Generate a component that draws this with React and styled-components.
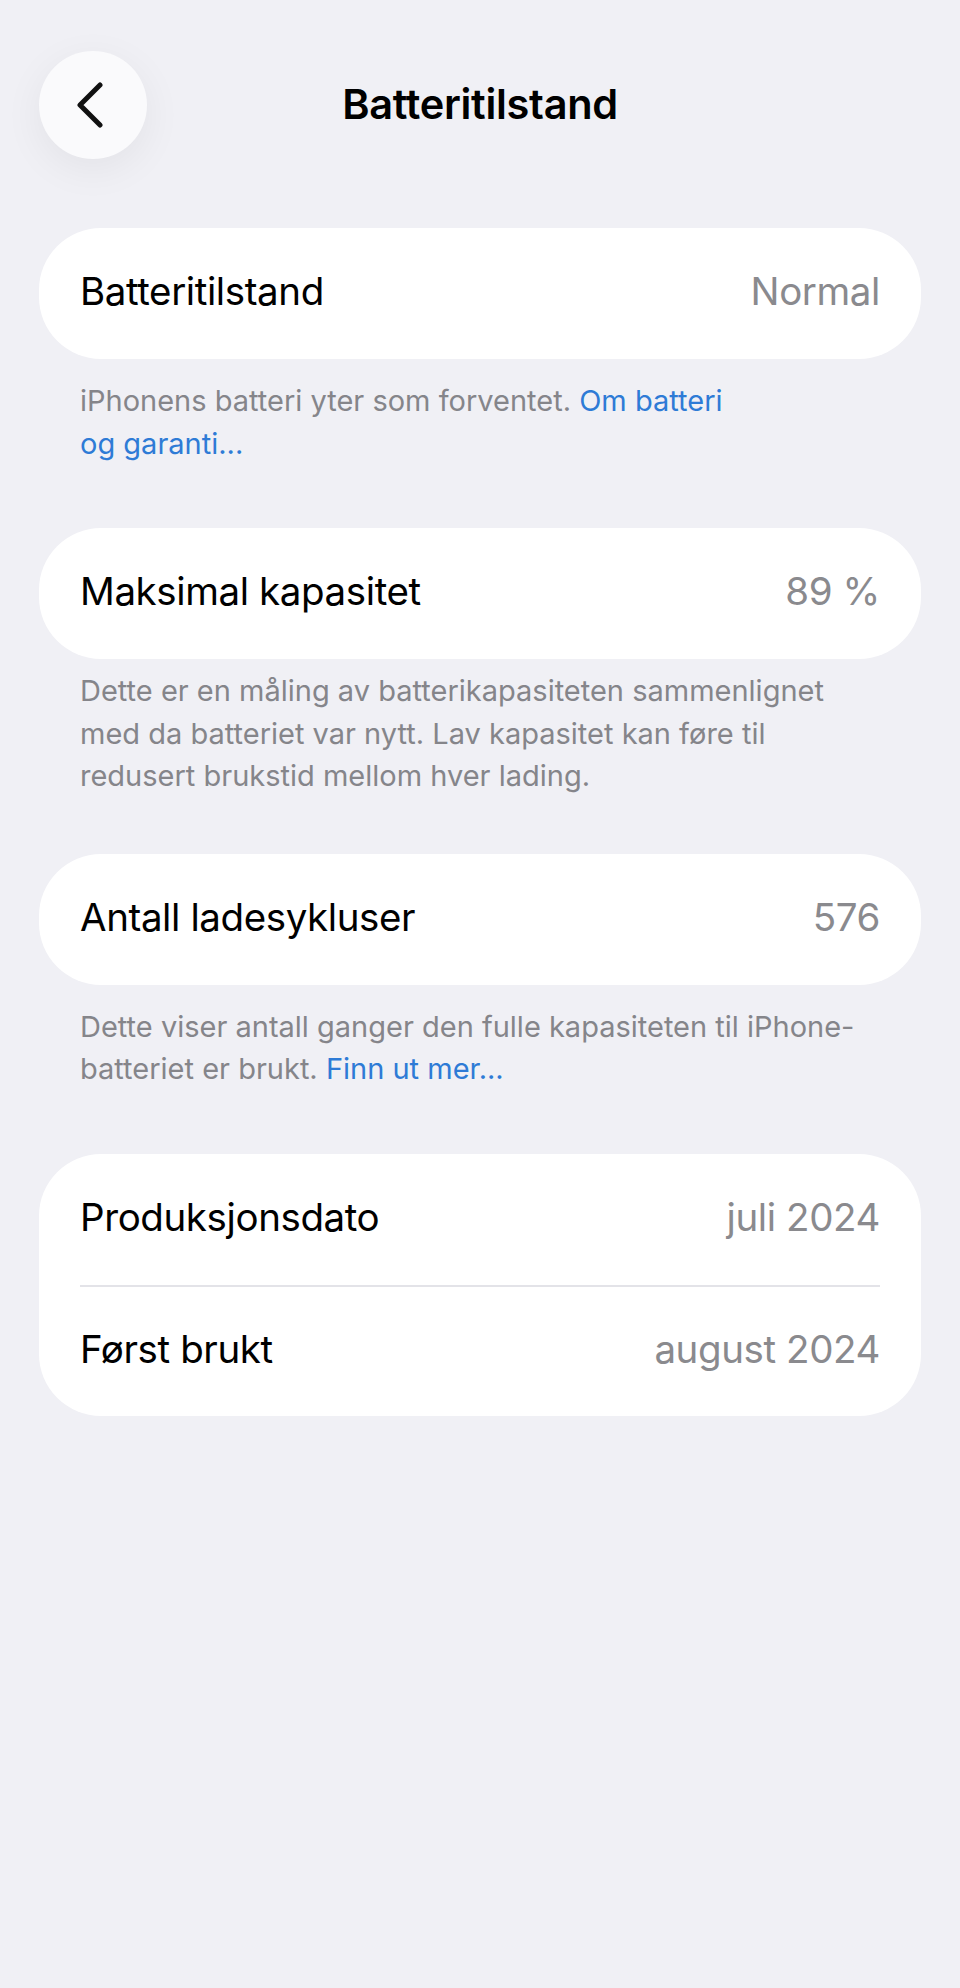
import styled, { createGlobalStyle } from 'styled-components';

const GlobalStyle = createGlobalStyle`
    html, body {
        margin: 0;
        padding: 0;
        background: #f0f0f5;
    }
    body {
        font-family: Inter, "Noto Sans", "Liberation Sans", sans-serif;
        -webkit-font-smoothing: antialiased;
    }
`;

const Page = styled.div`
    min-height: 1988px;
    box-sizing: border-box;
    padding: 51px 39px 0;
    background: #f0f0f5;
`;

const Header = styled.header`
    display: grid;
    grid-template-columns: 108px 1fr 108px;
    align-items: center;
    height: 108px;
    margin-bottom: 69px;
`;

const BackButton = styled.button`
    width: 108px;
    height: 108px;
    border-radius: 50%;
    border: none;
    padding: 0 6px 0 0;
    background: #fafafc;
    box-shadow: 0 10px 40px rgba(0, 0, 0, 0.06);
    display: flex;
    align-items: center;
    justify-content: center;
    cursor: pointer;
`;

const Title = styled.h1`
    margin: 0;
    padding-bottom: 3px;
    text-align: center;
    font-size: 41.5px;
    font-weight: 600;
    letter-spacing: -0.3px;
    color: #000;
`;

const Section = styled.section`
    display: flex;
    flex-direction: column;
`;

const Card = styled.div`
    background: #fff;
    border-radius: 62px;
    padding: 0 41px;
`;

const Row = styled.div`
    display: flex;
    align-items: center;
    justify-content: space-between;
    height: 131px;
    box-sizing: border-box;
    padding-bottom: 5px;
    border-top: ${(props) => (props.$divided ? '2px solid #e3e3e8' : 'none')};
    font-size: 38.5px;
    letter-spacing: -0.4px;
`;

const Label = styled.span`
    color: #000;
`;

const Value = styled.span`
    color: #8a8a8e;
`;

const Footer = styled.p`
    margin: 0;
    padding: ${(props) => (props.$tight ? '11px 41px 56px' : '21px 41px 63px')};
    font-size: 29px;
    line-height: 42.5px;
    color: #85858a;
`;

const Link = styled.span`
    color: #2e7bd6;
`;

const groups = [
    {
        items: [{ label: 'Batteritilstand', value: 'Normal' }],
        footer: (
            <>
                iPhonens batteri yter som forventet. <Link>Om batteri</Link>
                <br />
                <Link>og garanti...</Link>
            </>
        ),
    },
    {
        items: [{ label: 'Maksimal kapasitet', value: '89 %' }],
        tight: true,
        footer: (
            <>
                Dette er en måling av batterikapasiteten sammenlignet
                <br />
                med da batteriet var nytt. Lav kapasitet kan føre til
                <br />
                redusert brukstid mellom hver lading.
            </>
        ),
    },
    {
        items: [{ label: 'Antall ladesykluser', value: '576' }],
        footer: (
            <>
                Dette viser antall ganger den fulle kapasiteten til iPhone-
                <br />
                batteriet er brukt. <Link>Finn ut mer...</Link>
            </>
        ),
    },
    {
        items: [
            { label: 'Produksjonsdato', value: 'juli 2024' },
            { label: 'Først brukt', value: 'august 2024' },
        ],
    },
];

const App = () => {
    return (
        <>
            <GlobalStyle />
            <Page>
                <Header>
                    <BackButton aria-label="Tilbake">
                        <svg width="30" height="46" viewBox="0 0 30 46">
                            <path
                                d="M25 3 L5 23 L25 43"
                                fill="none"
                                stroke="#111"
                                strokeWidth="5"
                                strokeLinecap="round"
                                strokeLinejoin="round"
                            />
                        </svg>
                    </BackButton>
                    <Title>Batteritilstand</Title>
                    <span />
                </Header>

                {groups.map((group, i) => (
                    <Section key={i}>
                        <Card>
                            {group.items.map((item, j) => (
                                <Row key={item.label} $divided={j > 0}>
                                    <Label>{item.label}</Label>
                                    <Value>{item.value}</Value>
                                </Row>
                            ))}
                        </Card>
                        {group.footer && <Footer $tight={group.tight}>{group.footer}</Footer>}
                    </Section>
                ))}
            </Page>
        </>
    );
};

export default App;
